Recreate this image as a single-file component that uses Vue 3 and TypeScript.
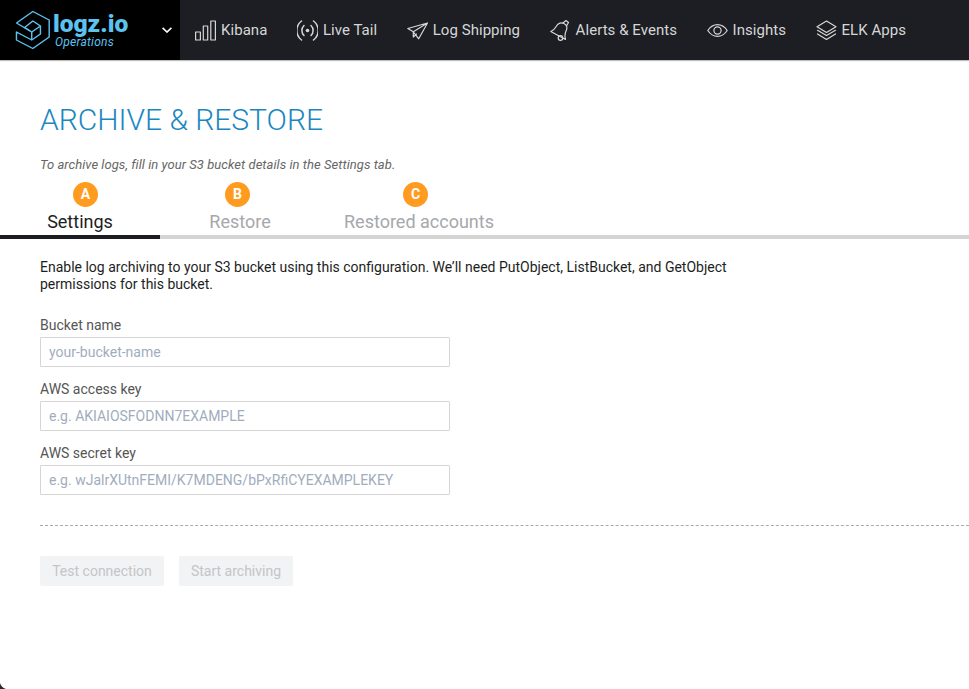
<script setup lang="ts">
const navItems = [
  { label: "Kibana", icon: "kibana" },
  { label: "Live Tail", icon: "live" },
  { label: "Log Shipping", icon: "ship" },
  { label: "Alerts & Events", icon: "bell" },
  { label: "Insights", icon: "eye" },
  { label: "ELK Apps", icon: "stack" },
];

const tabs = [
  { label: "Settings", active: true },
  { label: "Restore", active: false },
  { label: "Restored accounts", active: false },
];

const fields = [
  { label: "Bucket name", placeholder: "your-bucket-name" },
  { label: "AWS access key", placeholder: "e.g. AKIAIOSFODNN7EXAMPLE" },
  { label: "AWS secret key", placeholder: "e.g. wJalrXUtnFEMI/K7MDENG/bPxRfiCYEXAMPLEKEY" },
];
</script>

<template>
  <div class="page">
    <header class="topbar">
      <div class="brand">
        <svg class="brand-mark" width="48" height="44" viewBox="0 0 44 44" preserveAspectRatio="none" fill="none" stroke="#5cc3f0" stroke-width="1.3" stroke-linejoin="round">
          <path d="M5 15 20 3.500 35 12v17L20 40.500 5 32v-8l14 8 8-6v-8l-7-5-7.500 6.500L19 24l8-6" />
          <path d="M5 15l12.500 8M19 24v8" />
        </svg>
        <div class="brand-text">
          <span class="brand-name">logz.io</span>
          <span class="brand-sub">Operations</span>
        </div>
        <svg class="brand-caret" width="10" height="6" viewBox="0 0 10 6" fill="none" stroke="#fff" stroke-width="1.6">
          <path d="M.6.8 5 5l4.400-4.200" />
        </svg>
      </div>
      <nav class="nav">
        <a v-for="item in navItems" :key="item.label" class="nav-item">
          <svg class="nav-icon" width="21" height="21" viewBox="0 0 21 21" fill="none" stroke="#d6d6d6" stroke-width="1.2" stroke-linecap="round" stroke-linejoin="round">
            <template v-if="item.icon === 'kibana'">
              <rect x=".6" y="12" width="4.800" height="8" />
              <rect x="8.300" y="6" width="4.400" height="14" />
              <rect x="15.800" y="1" width="4.600" height="19" />
            </template>
            <template v-else-if="item.icon === 'live'">
              <circle cx="10.500" cy="10.500" r="1.800" fill="#d6d6d6" stroke="none" />
              <path d="M7 5.500a7 7 0 0 0 0 10M14 5.500a7 7 0 0 1 0 10" stroke-width="1.500" />
              <path d="M4.500 1a12 12 0 0 0 0 19M16.500 1a12 12 0 0 1 0 19" stroke-width="1.500" />
            </template>
            <template v-else-if="item.icon === 'ship'">
              <path d="M20.500 3 .8 8.500l5.500 3.300L20.500 3l-8.800 15.800-5.400-7V17l3.200-2.900" />
            </template>
            <template v-else-if="item.icon === 'bell'">
              <path d="M.8 11.500C4 10.500 5 8.500 6.500 6 8 3 11.500 2 14 3.500c3 1.500 3.500 4.500 2.200 7-1.200 2.500-1.700 5.500-.7 9z" />
              <path d="M13 3l3-2.500 2.500 2-2 3.500" />
              <circle cx="10.500" cy="18" r="2.300" />
            </template>
            <template v-else-if="item.icon === 'eye'">
              <path d="M.8 10.500c2.500-3.800 5.800-5.800 9.700-5.800s7.200 2 9.700 5.800c-2.500 3.800-5.800 5.800-9.700 5.800S3.300 14.300.8 10.500z" />
              <circle cx="10.500" cy="10.500" r="3.600" />
            </template>
            <template v-else>
              <path d="M10.500 1 20 6.800l-9.500 5.700L1 6.800z" />
              <path d="m1.500 10.300 9 5.200 9-5.200M1.500 14l9 5.500 9-5.500" />
            </template>
          </svg>
          <span>{{ item.label }}</span>
        </a>
      </nav>
    </header>

    <main class="content">
      <h1 class="title">ARCHIVE &amp; RESTORE</h1>
      <p class="hint">To archive logs, fill in your S3 bucket details in the Settings tab.</p>

      <div class="tabs">
        <div
          v-for="tab in tabs"
          :key="tab.label"
          class="tab"
          :class="{ active: tab.active }"
        >{{ tab.label }}</div>
        <span class="badge badge-a">A</span>
        <span class="badge badge-b">B</span>
        <span class="badge badge-c">C</span>
      </div>

      <p class="intro">
        Enable log archiving to your S3 bucket using this configuration. We’ll need PutObject, ListBucket, and GetObject permissions for this bucket.
      </p>

      <form class="form" @submit.prevent>
        <div v-for="field in fields" :key="field.label" class="field">
          <label class="field-label">{{ field.label }}</label>
          <input class="field-input" type="text" :placeholder="field.placeholder" />
        </div>
      </form>

      <div class="divider"></div>

      <div class="actions">
        <button class="btn test" type="button" disabled>Test connection</button>
        <button class="btn start" type="button" disabled>Start archiving</button>
      </div>
    </main>

    <svg class="corner" width="6" height="6" viewBox="0 0 6 6"><path d="M0 0c.5 2.500 2.500 5 6 6H0z" fill="#2a2a2a" /></svg>
  </div>
</template>

<style scoped>
.page {
  position: relative;
  width: 969px;
  height: 689px;
  overflow: hidden;
  background: #fff;
  font-family: Roboto, "Liberation Sans", sans-serif;
}

.topbar {
  display: flex;
  height: 60px;
  background: #1c1e23;
  box-shadow: 0 1px 1px rgba(0, 0, 0, 0.25);
}

.brand {
  display: flex;
  align-items: center;
  width: 180px;
  padding-left: 11px;
  box-sizing: border-box;
  background: #000;
  flex-shrink: 0;
}

.brand-mark {
  flex-shrink: 0;
}

.brand-text {
  display: flex;
  flex-direction: column;
  width: 109px;
  margin-left: -6px;
  margin-top: 1px;
}

.brand-name {
  font-weight: 900;
  font-size: 24.5px;
  line-height: 21px;
  color: #5cc3f0;
}

.brand-sub {
  font-size: 12px;
  line-height: 14px;
  font-style: italic;
  color: #5cc3f0;
  margin-top: 1px;
  margin-left: 2px;
  letter-spacing: 0.25px;
}

.brand-caret {
  flex-shrink: 0;
}

.nav {
  display: flex;
  align-items: center;
  gap: 29.5px;
  padding-left: 15px;
}

.nav-item {
  display: flex;
  align-items: center;
  gap: 5px;
  color: #d6d6d6;
  font-size: 15px;
  letter-spacing: 0.05px;
  white-space: nowrap;
}

.content {
  padding-top: 42px;
}

.title {
  margin: 0 0 0 40px;
  font-size: 30px;
  line-height: 36px;
  font-weight: 300;
  color: #1b87bf;
}

.hint {
  margin: 18px 0 0 40px;
  font-size: 13px;
  line-height: 17px;
  font-style: italic;
  letter-spacing: 0.05px;
  color: #666;
}

.tabs {
  position: relative;
  display: flex;
  height: 64px;
  margin-top: 2px;
  box-sizing: border-box;
  border-bottom: 4px solid #d5d5d5;
}

.tab {
  min-width: 160px;
  height: 64px;
  box-sizing: border-box;
  padding: 36px 24px 0;
  margin-bottom: -4px;
  border-bottom: 4px solid transparent;
  text-align: center;
  font-size: 18px;
  line-height: 22px;
  color: #a6a8ab;
}

.tab.active {
  color: #1c1e23;
  border-bottom-color: #1c1e23;
}

.badge {
  position: absolute;
  top: 7px;
  width: 25px;
  height: 25px;
  border-radius: 50%;
  background: #ff9b1f;
  color: #fff;
  font-size: 14px;
  font-weight: 700;
  line-height: 25px;
  text-align: center;
}

.badge-a { left: 73px; }
.badge-b { left: 225px; }
.badge-c { left: 403px; }

.intro {
  width: 710px;
  margin: 20px 0 0 40px;
  font-size: 14px;
  line-height: 17px;
  color: #1c1e23;
}

.form {
  display: flex;
  flex-direction: column;
  gap: 14px;
  margin: 24px 0 0 40px;
}

.field {
  display: flex;
  flex-direction: column;
  gap: 4px;
}

.field-label {
  font-size: 14px;
  line-height: 16px;
  color: #555;
}

.field-input {
  width: 410px;
  height: 30px;
  box-sizing: border-box;
  padding: 0 8px;
  border: 1px solid #d5d5d5;
  border-radius: 1px;
  background: #fff;
  font-family: inherit;
  font-size: 14px;
  outline: none;
}

.field-input::placeholder {
  color: #9fadbd;
  opacity: 1;
}

.divider {
  margin: 30px 0 0 40px;
  border-top: 1px dashed #aaa;
}

.actions {
  display: flex;
  gap: 15px;
  margin: 30px 0 0 40px;
}

.btn {
  height: 30px;
  padding: 0;
  border: none;
  border-radius: 2px;
  background: #f2f3f5;
  color: #c4c5c7;
  font-family: inherit;
  font-size: 14px;
}

.btn.test { width: 124px; }
.btn.start { width: 114px; }

.corner {
  position: absolute;
  left: 0;
  bottom: 0;
}
</style>

<style>
html,
body {
  margin: 0;
  background: #fff;
}
</style>
